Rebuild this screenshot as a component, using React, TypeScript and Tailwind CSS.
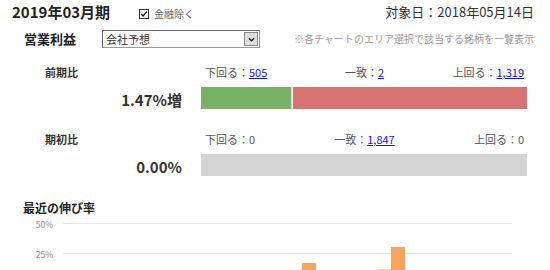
import React from 'react';

type Counts = { below: number; equal: number; above: number };

const fmt = (n: number) => n.toLocaleString('en-US');

function CountLabel({ label, value }: { label: string; value: number }) {
  return (
    <span className="whitespace-nowrap text-[#555]">
      {label}：
      {value > 0 ? (
        <a href="#" className="text-[#1111ee] underline">
          {fmt(value)}
        </a>
      ) : (
        <span>{value}</span>
      )}
    </span>
  );
}

function CompareRow({ title, value, counts, className }: { title: string; value: string; counts: Counts; className?: string }) {
  const total = counts.below + counts.equal + counts.above;
  const pct = (n: number) => (total ? (n / total) * 100 : 0);
  return (
    <div className={className}>
      <div className="flex h-[14px] items-center text-[11px] leading-[14px]">
        <div className="w-[201px] pl-[45px] font-bold text-[#333]">{title}</div>
        <div className="grid w-[326px] grid-cols-3 pl-[4px] pr-[3px]">
          <div className="text-left">
            <CountLabel label="下回る" value={counts.below} />
          </div>
          <div className="text-center">
            <CountLabel label="一致" value={counts.equal} />
          </div>
          <div className="text-right">
            <CountLabel label="上回る" value={counts.above} />
          </div>
        </div>
      </div>
      <div className="mt-[8px] flex h-[22px] items-center">
        <div className="w-[201px] pr-[19px] pt-[3px] text-right text-[15px] font-bold leading-[20px] text-[#333]">{value}</div>
        <div className="flex h-full w-[326px] bg-[#d4d4d4]">
          <div className="h-full bg-[#79b166]" style={{ width: `${pct(counts.below)}%` }} />
          <div className="h-full bg-[#d4d4d4]" style={{ width: `${pct(counts.equal)}%` }} />
          {counts.above > 0 && (
            <div className="h-full border-l border-[#f4f4f4] bg-[#d97373]" style={{ width: `${pct(counts.above)}%` }} />
          )}
        </div>
      </div>
    </div>
  );
}

export default function App() {
  return (
    <div className="h-[270px] w-[550px] overflow-hidden bg-white font-['Noto_Sans_CJK_JP',sans-serif] text-[#333]">
      <div className="flex h-[20px] items-center pt-[4px]">
        <div className="ml-[12px] text-[15px] font-bold leading-[20px] text-[#222]">2019年03月期</div>
        <label className="ml-[29px] mt-[4px] flex items-center text-[10px] leading-[12px] text-[#666]">
          <span className="flex h-[10px] w-[10px] items-center justify-center border border-[#333] bg-white">
            <svg viewBox="0 0 10 10" className="h-[8px] w-[8px]">
              <path d="M1.5 5 L4 7.5 L8.5 2" fill="none" stroke="#111" strokeWidth="1.8" />
            </svg>
          </span>
          <span className="ml-[5px]">金融除く</span>
        </label>
        <div className="ml-auto mr-[16px] text-[13px] leading-[20px] text-[#333]">対象日：2018年05月14日</div>
      </div>

      <div className="mt-[10px] flex h-[18px] items-center">
        <div className="w-[102px] pl-[24px] text-[13px] font-bold leading-[18px] text-[#222]">営業利益</div>
        <div className="flex h-[18px] w-[158px] items-center border border-[#999] border-l-[#666] border-t-[#666] bg-white">
          <span className="ml-[3px] flex-1 text-[11px] leading-[16px] text-[#333]">会社予想</span>
          <span className="mr-[1px] flex h-[14px] w-[14px] items-center justify-center border border-[#888] bg-[#dedede]">
            <svg viewBox="0 0 10 10" className="h-[9px] w-[9px]">
              <path d="M2 3.5 L5 6.5 L8 3.5" fill="none" stroke="#222" strokeWidth="1.6" />
            </svg>
          </span>
        </div>
        <div className="ml-auto mr-[16px] text-[10px] leading-[14px] text-[#999]">※各チャートのエリア選択で該当する銘柄を一覧表示</div>
      </div>

      <CompareRow className="mt-[17px]" title="前期比" value="1.47%増" counts={{ below: 505, equal: 2, above: 1319 }} />
      <CompareRow className="mt-[23px]" title="期初比" value="0.00%" counts={{ below: 0, equal: 1847, above: 0 }} />

      <div className="mt-[24px] h-[16px] pl-[23px] text-[12px] font-bold leading-[16px] text-[#222]">最近の伸び率</div>
      <svg width="550" height="54" className="block">
        <line x1="63" y1="7.5" x2="512" y2="7.5" stroke="#e6e6e6" strokeWidth="1" />
        <line x1="63" y1="37.5" x2="512" y2="37.5" stroke="#e6e6e6" strokeWidth="1" />
        <text x="53" y="11.5" textAnchor="end" fontSize="8.5" fill="#888">50%</text>
        <text x="53" y="41.5" textAnchor="end" fontSize="8.5" fill="#888">25%</text>
        <rect x="302" y="47" width="14" height="10" fill="#f7a55e" />
        <rect x="377" y="53" width="14" height="4" fill="#f2e6a0" />
        <rect x="391" y="31" width="14" height="26" fill="#f7a55e" />
      </svg>
    </div>
  );
}
